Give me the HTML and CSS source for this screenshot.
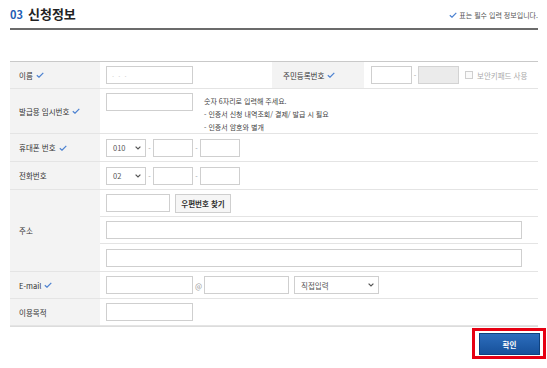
FILE: index.html
```html
<!DOCTYPE html>
<html lang="ko">
<head>
    <meta charset="UTF-8">
    <meta name="viewport" content="width=device-width, initial-scale=1.0">
    <title>신청정보</title>
    <link rel="stylesheet" href="styles.css">
</head>
<body>
    <div class="wrap">
        <div class="sec-head">
            <h2 class="sec-title"><span class="num">03</span>신청정보</h2>
            <p class="req-note">
                <svg class="chk" width="8" height="6" viewBox="0 0 8 6"><path d="M0.8 3.2 L3 5.2 L7.3 0.8" /></svg>표는 필수 입력 정보입니다.
            </p>
        </div>

        <div class="form-grid">
            <!-- 이름 / 주민등록번호 -->
            <div class="th">이름 <svg class="chk" width="8" height="6" viewBox="0 0 8 6"><path d="M0.8 3.2 L3 5.2 L7.3 0.8" /></svg></div>
            <div class="td">
                <input type="text" class="inp w87 masked" value="· · ·">
            </div>
            <div class="th th2">주민등록번호 <svg class="chk" width="8" height="6" viewBox="0 0 8 6"><path d="M0.8 3.2 L3 5.2 L7.3 0.8" /></svg></div>
            <div class="td td4">
                <input type="text" class="inp w41">
                <span class="sep sep6">-</span>
                <input type="text" class="inp w41 off" disabled>
                <span class="cbox"></span>
                <span class="cb-text">보안키패드 사용</span>
            </div>

            <!-- 발급용 임시번호 -->
            <div class="th">발급용 임시번호 <svg class="chk" width="8" height="6" viewBox="0 0 8 6"><path d="M0.8 3.2 L3 5.2 L7.3 0.8" /></svg></div>
            <div class="td span3 top">
                <input type="text" class="inp w87">
                <div class="help">
                    <p>숫자 6자리로 입력해 주세요.</p>
                    <p>- 인증서 신청 내역조회/ 결제/ 발급 시 필요</p>
                    <p>- 인증서 암호와 별개</p>
                </div>
            </div>

            <!-- 휴대폰 번호 -->
            <div class="th">휴대폰 번호 <svg class="chk" width="8" height="6" viewBox="0 0 8 6"><path d="M0.8 3.2 L3 5.2 L7.3 0.8" /></svg></div>
            <div class="td span3 tight">
                <div class="sel w40"><span>010</span><svg width="6" height="4" viewBox="0 0 6 4"><path d="M0.6 0.6 L3 3 L5.4 0.6" /></svg></div>
                <span class="sep">-</span>
                <input type="text" class="inp w40">
                <span class="sep">-</span>
                <input type="text" class="inp w40">
            </div>

            <!-- 전화번호 -->
            <div class="th">전화번호</div>
            <div class="td span3 tight">
                <div class="sel w40"><span>02</span><svg width="6" height="4" viewBox="0 0 6 4"><path d="M0.6 0.6 L3 3 L5.4 0.6" /></svg></div>
                <span class="sep">-</span>
                <input type="text" class="inp w40">
                <span class="sep">-</span>
                <input type="text" class="inp w40">
            </div>

            <!-- 주소 -->
            <div class="th addr">주소</div>
            <div class="td span3">
                <input type="text" class="inp w64">
                <button type="button" class="btn-zip">우편번호 찾기</button>
            </div>
            <div class="td span3">
                <input type="text" class="inp w416">
            </div>
            <div class="td span3">
                <input type="text" class="inp w416">
            </div>

            <!-- E-mail -->
            <div class="th">E-mail <svg class="chk" width="8" height="6" viewBox="0 0 8 6"><path d="M0.8 3.2 L3 5.2 L7.3 0.8" /></svg></div>
            <div class="td span3 tight">
                <input type="text" class="inp w87">
                <span class="sep at">@</span>
                <input type="text" class="inp w85">
                <div class="sel w85 ml5"><span>직접입력</span><svg width="6" height="4" viewBox="0 0 6 4"><path d="M0.6 0.6 L3 3 L5.4 0.6" /></svg></div>
            </div>

            <!-- 이용목적 -->
            <div class="th">이용목적</div>
            <div class="td span3">
                <input type="text" class="inp w87">
            </div>
        </div>

        <div class="btn-area">
            <div class="hl">
                <button type="button" class="btn-ok">확인</button>
            </div>
        </div>
    </div>
</body>
</html>
```

FILE: styles.css
```css
* { box-sizing: border-box; }
body { margin: 0; font-family: "Noto Sans CJK KR", "Noto Sans", sans-serif; color: #333; background: #fff; }
p { margin: 0; }

.wrap { width: 528px; margin-left: 10px; }

.sec-head { display: flex; justify-content: space-between; align-items: center; height: 30px; border-bottom: 2px solid #6b6b6b; }
.sec-title { margin: 0; font-size: 13px; font-weight: bold; color: #222; line-height: 20px; }
.sec-title .num { color: #1f5fb5; font-size: 11px; margin-right: 5px; }
.req-note { font-size: 7px; color: #555; display: flex; align-items: center; gap: 2px; padding-top: 2px; }

.chk { flex: none; }
.chk path { fill: none; stroke: #4a80d0; stroke-width: 1.2; }

.form-grid { margin-top: 31px; display: grid; grid-template-columns: 90px 172px 92px 174px; grid-template-rows: 27px 45px 28px 28px 27px 27px 28px 27px 27px; border-top: 1px solid #c9c9c9; border-bottom: 1px solid #dcdcdc; }

.th { background: #f3f3f3; border-bottom: 1px solid #e4e4e4; display: flex; align-items: center; gap: 3px; padding-left: 9px; font-size: 7.5px; color: #333; }
.th2 { padding-left: 11px; }
.th.addr { grid-row: span 3; }

.td { display: flex; align-items: center; gap: 5px; padding-left: 6px; border-bottom: 1px solid #e4e4e4; font-size: 7.5px; }
.td4 { padding-left: 7px; gap: 0; }
.span3 { grid-column: 2 / 5; }
.td.top { align-items: flex-start; padding-top: 4px; gap: 11px; }
.td.tight { gap: 0; }

.inp { height: 18px; border: 1px solid #cfcfcf; background: #fff; padding: 0 5px; font-family: inherit; font-size: 7.5px; color: #555; outline: none; }
.inp.off { background: #ebebeb; border-color: #d3d3d3; }
.inp.masked { color: #d4d4d4; letter-spacing: 1px; }
.w40 { width: 40px; }
.w41 { width: 41px; }
.w64 { width: 64px; }
.w85 { width: 85px; }
.w87 { width: 87px; }
.w416 { width: 416px; }
.ml5 { margin-left: 5px; }

.sep { width: 7px; text-align: center; color: #999; font-size: 7px; }
.sep6 { width: 6px; }
.sep.at { width: 11px; font-size: 7.5px; }

.cbox { width: 8px; height: 8px; border: 1px solid #cfcfcf; background: #fafafa; margin-left: 6px; }
.cb-text { margin-left: 4px; color: #aaa; font-size: 7.5px; }

.sel { height: 18px; border: 1px solid #cfcfcf; background: #fff; display: flex; align-items: center; justify-content: space-between; padding: 0 4px 0 6px; color: #555; font-size: 7.5px; }
.sel path { fill: none; stroke: #555; stroke-width: 1.2; }

.help { font-size: 7px; line-height: 13px; color: #444; margin-top: 2px; }

.btn-zip { width: 56px; height: 19px; border: 1px solid #cfcfcf; background: #f6f6f6; font-family: inherit; font-size: 7.5px; font-weight: bold; color: #333; padding: 0; }

.btn-area { display: flex; justify-content: flex-end; margin-right: -8px; margin-top: 1px; }
.hl { border: 3px solid #e60012; padding: 2px 3px 1px 4px; }
.btn-ok { display: block; width: 61px; height: 22px; border: 1px solid #0f417e; background: linear-gradient(#2c6dbd, #17519a); color: #fff; font-family: inherit; font-size: 7.5px; font-weight: bold; padding: 0; }
```
